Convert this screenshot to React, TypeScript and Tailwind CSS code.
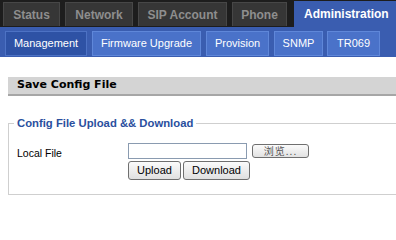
import React from "react";

const topTabs = [
  { label: "Status", w: "w-[57px]" },
  { label: "Network", w: "w-[68px]" },
  { label: "SIP Account", w: "w-[89px]" },
  { label: "Phone", w: "w-[55px]" },
];

const subTabs = [
  { label: "Firmware Upgrade", w: "w-[109px]", ml: "ml-[5px]" },
  { label: "Provision", w: "w-[63px]", ml: "ml-[5px]" },
  { label: "SNMP", w: "w-[49px]", ml: "ml-[5px]" },
  { label: "TR069", w: "w-[53px]", ml: "ml-[4px]" },
];

export default function App() {
  return (
    <div className="w-[396px] h-[213px] overflow-hidden bg-white font-['Liberation_Sans',Arial,sans-serif]">
      {/* top nav */}
      <div className="h-[27px] bg-[#1d1d1d] flex items-end pl-[3px]">
        {topTabs.map((t) => (
          <div
            key={t.label}
            className={`${t.w} h-[24px] mr-[5px] mb-[1px] bg-[#363636] border border-[#474747] border-b-0 flex items-center justify-center text-[12px] font-bold text-[#8e8e8e]`}
          >
            {t.label}
          </div>
        ))}
        <div className="ml-[2px] flex-1 h-[26px] bg-[#3a5db0] flex items-center pl-[10px] text-[12px] font-bold text-white">
          Administration
        </div>
      </div>
      {/* sub nav */}
      <div className="h-[30px] bg-[#3a5db0] flex items-start pt-[4px] pl-[5px]">
        <div className="w-[82px] h-[25px] bg-[#2e52a5] border border-[#4d72c4] flex items-center justify-center text-[11px] text-white">
          Management
        </div>
        {subTabs.map((t) => (
          <div
            key={t.label}
            className={`${t.w} ${t.ml} h-[25px] bg-[#4a72c9] border border-[#5f87d9] flex items-center justify-center text-[11px] text-white`}
          >
            {t.label}
          </div>
        ))}
      </div>
      {/* content */}
      <div className="pt-[20px] pl-[8px]">
        <div className="h-[19px] bg-[#d4d4d4] border-b-2 border-[#a6a6a6] flex items-center pl-[9px] font-['DejaVu_Sans',sans-serif] text-[11px] font-bold text-black">
          Save Config File
        </div>
        <fieldset className="mt-[20px] mr-[-20px] border border-[#cfcfcf] pb-[14px]">
          <legend className="ml-[5px] px-[3px] text-[11.3px] leading-[14px] font-bold text-[#2a4f9e]">
            Config File Upload &amp;&amp; Download
          </legend>
          <div className="flex mt-[13px] pl-[8px]">
            <div className="w-[111px] pt-[3px] text-[10.5px] text-black">Local File</div>
            <div className="flex flex-col">
              <div className="flex items-center">
                <div className="w-[119px] h-[16px] border border-[#8a9bb0] bg-white" />
                <button className="ml-[5px] w-[57px] h-[14px] rounded-[3px] border border-[#6f6f6f] bg-gradient-to-b from-[#fbfbfb] to-[#e2e2e2] flex items-center justify-center text-[10px] text-[#555] font-['Noto_Sans_CJK_SC',sans-serif] leading-none tracking-[1px]">
                  浏览...
                </button>
              </div>
              <div className="flex mt-[2px]">
                <button className="w-[53px] h-[19px] rounded-[3px] border border-[#6f6f6f] bg-gradient-to-b from-[#fbfbfb] to-[#e0e0e0] flex items-center justify-center text-[11px] text-black">
                  Upload
                </button>
                <button className="ml-[2px] w-[67px] h-[19px] rounded-[3px] border border-[#6f6f6f] bg-gradient-to-b from-[#fbfbfb] to-[#e0e0e0] flex items-center justify-center text-[11px] text-black">
                  Download
                </button>
              </div>
            </div>
          </div>
        </fieldset>
      </div>
    </div>
  );
}
